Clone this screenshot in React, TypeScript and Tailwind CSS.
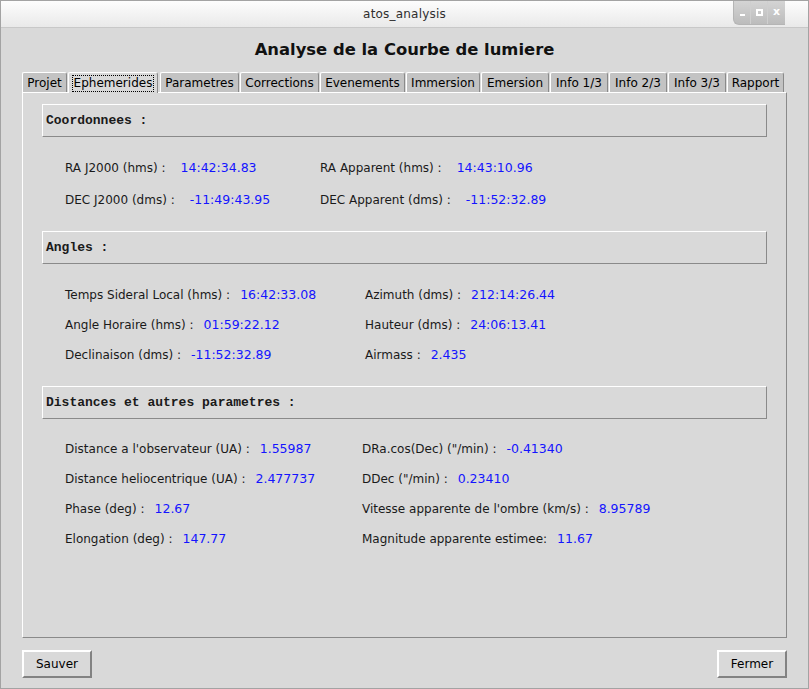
import React from 'react';

// tab label and slot width (taken from the screenshot)
const tabs: { t: string; w: number }[] = [
    { t: 'Projet', w: 46 },
    { t: 'Ephemerides', w: 92 },
    { t: 'Parametres', w: 80 },
    { t: 'Corrections', w: 80 },
    { t: 'Evenements', w: 86 },
    { t: 'Immersion', w: 75 },
    { t: 'Emersion', w: 69 },
    { t: 'Info 1/3', w: 59 },
    { t: 'Info 2/3', w: 59 },
    { t: 'Info 3/3', w: 59 },
    { t: 'Rapport', w: 58 },
];

type Pair = { label: string; value: string };

const coords: Pair[][] = [
    [{ label: 'RA J2000 (hms) :', value: '14:42:34.83' }, { label: 'RA Apparent (hms) :', value: '14:43:10.96' }],
    [{ label: 'DEC J2000 (dms) :', value: '-11:49:43.95' }, { label: 'DEC Apparent (dms) :', value: '-11:52:32.89' }],
];

const angles: Pair[][] = [
    [{ label: 'Temps Sideral Local (hms) :', value: '16:42:33.08' }, { label: 'Azimuth (dms) :', value: '212:14:26.44' }],
    [{ label: 'Angle Horaire (hms) :', value: '01:59:22.12' }, { label: 'Hauteur (dms) :', value: '24:06:13.41' }],
    [{ label: 'Declinaison (dms) :', value: '-11:52:32.89' }, { label: 'Airmass :', value: '2.435' }],
];

const distances: Pair[][] = [
    [{ label: "Distance a l'observateur (UA) :", value: '1.55987' }, { label: 'DRa.cos(Dec) ("/min) :', value: '-0.41340' }],
    [{ label: 'Distance heliocentrique (UA) :', value: '2.477737' }, { label: 'DDec ("/min) :', value: '0.23410' }],
    [{ label: 'Phase (deg) :', value: '12.67' }, { label: "Vitesse apparente de l'ombre (km/s) :", value: '8.95789' }],
    [{ label: 'Elongation (deg) :', value: '147.77' }, { label: 'Magnitude apparente estimee:', value: '11.67' }],
];

const PairCell = ({ p, gap }: { p: Pair; gap: string }) => (
    <div className={`flex items-center whitespace-nowrap ${gap}`}>
        <span className="text-[12px] text-[#1a1a1a]">{p.label}</span>
        <span className="text-[12.5px] text-[#1414ff]">{p.value}</span>
    </div>
);

const Header = ({ title }: { title: string }) => (
    <div className="h-[33px] flex items-center pl-[3px] border-t border-l border-t-white border-l-white border-b border-r border-b-[#8a8a8a] border-r-[#8a8a8a] font-['Liberation_Mono',monospace] font-bold text-[13px] text-[#1a1a1a]">
        {title}
    </div>
);

const Rows = ({ rows, col, rowH, gap = 'gap-[10px]' }: { rows: Pair[][]; col: string; rowH: string; gap?: string }) => (
    <div className="pl-[23px]">
        {rows.map((r, i) => (
            <div key={i} className={`flex items-center ${rowH}`}>
                <div className={col}><PairCell p={r[0]} gap={gap} /></div>
                <PairCell p={r[1]} gap={gap} />
            </div>
        ))}
    </div>
);

export default function App() {
    return (
        <div className="w-[809px] h-[689px] bg-[#d9d9d9] border border-[#a3a3a3] flex flex-col font-['DejaVu_Sans',sans-serif] text-[12px] text-black overflow-hidden">
            {/* title bar */}
            <div className="relative h-[27px] shrink-0 bg-gradient-to-b from-[#fdfdfd] to-[#e9e9e9] border-b border-[#c8c8c8] flex items-center justify-center">
                <span className="text-[12px] text-[#2e2e2e] tracking-[0.2px]">atos_analysis</span>
                <div className="absolute right-[23px] top-0 h-[24px] flex rounded-bl-[6px] overflow-hidden border-l border-b border-[#b5b5b5] bg-gradient-to-b from-[#d4d4d4] to-[#bcbcbc]">
                    <div className="w-[17px] flex items-end justify-center pb-[8px] border-r border-[#cfcfcf]">
                        <div className="w-[5px] h-[2px] bg-white" />
                    </div>
                    <div className="w-[17px] flex items-center justify-center border-r border-[#cfcfcf]">
                        <div className="w-[7px] h-[7px] border-2 border-white" />
                    </div>
                    <div className="w-[17px] flex items-center justify-center text-white text-[11px] font-bold">x</div>
                </div>
            </div>

            <div className="flex flex-col px-[21px]">
                <div className="mt-[10px] h-[24px] flex items-center justify-center font-bold text-[16.4px] text-[#111]">
                    Analyse de la Courbe de lumiere
                </div>

                {/* tabs */}
                <div className="mt-[10px] h-[20px] flex relative z-10">
                    {tabs.map(({ t, w }) => {
                        const sel = t === 'Ephemerides';
                        return (
                            <div key={t} style={{ width: w }} className={`shrink-0 ${sel ? 'pr-[2px]' : 'pr-[1px]'}`}>
                                <div
                                    className={`px-[3px] flex items-center justify-center whitespace-nowrap border-t border-l border-r border-t-white border-l-white border-r-[#8a8a8a] rounded-tr-[3px] rounded-tl-[2px] ${sel ? 'bg-[#d9d9d9] h-[21px]' : 'bg-[#c3c3c3] h-[20px]'}`}
                                >
                                    <span className={sel ? 'outline outline-1 outline-dotted outline-black px-[1px] leading-[15px]' : 'px-[1px]'}>{t}</span>
                                </div>
                            </div>
                        );
                    })}
                </div>

                {/* panel */}
                <div className="h-[546px] w-[765px] border-t border-l border-t-white border-l-white border-r border-b border-r-[#8a8a8a] border-b-[#8a8a8a] px-[19px] pt-[11px]">
                    <Header title="Coordonnees :" />
                    <div className="mt-[15px]">
                        <Rows rows={coords} col="w-[255px]" rowH="h-[32px]" gap="gap-[15px]" />
                    </div>
                    <div className="mt-[15px]"><Header title="Angles :" /></div>
                    <div className="mt-[16px]">
                        <Rows rows={angles} col="w-[300px]" rowH="h-[30px]" />
                    </div>
                    <div className="mt-[16px]"><Header title="Distances et autres parametres :" /></div>
                    <div className="mt-[15px]">
                        <Rows rows={distances} col="w-[297px]" rowH="h-[30px]" />
                    </div>
                </div>

                {/* buttons */}
                <div className="mt-[12px] flex justify-between">
                    {['Sauver', 'Fermer'].map((b) => (
                        <div key={b} className="w-[70px] h-[28px] flex items-center justify-center border-2 border-t-white border-l-white border-r-[#828282] border-b-[#828282] bg-[#d9d9d9] text-[12px]">
                            {b}
                        </div>
                    ))}
                </div>
            </div>
        </div>
    );
}
